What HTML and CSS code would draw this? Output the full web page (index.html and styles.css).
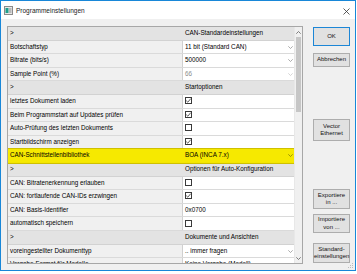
FILE: index.html
```html
<!DOCTYPE html>
<html>
<head>
<meta charset="utf-8">
<link rel="stylesheet" href="styles.css">
</head>
<body>
<div class="window">
  <div class="titlebar">
    <svg class="appicon" width="9" height="9" viewBox="0 0 9 9"><rect x="0.5" y="0.5" width="8" height="8" fill="#e8e8e8" stroke="#8a8a8a"/><rect x="1.5" y="2" width="3" height="5" fill="#1f9e8a"/><rect x="5" y="2" width="2.5" height="5" fill="#b9b9b9"/></svg>
    <span class="title">Programmeinstellungen</span>
    <svg class="close" width="7" height="7" viewBox="0 0 7 7"><path d="M0.5 0.5 L6.5 6.5 M6.5 0.5 L0.5 6.5" stroke="#333" stroke-width="0.8"/></svg>
  </div>
  <div class="client">
    <div class="grid">
      <div class="rows">
        <div class="row cat"><div class="name">&gt;</div><div class="val">CAN-Standardeinstellungen</div></div>
        <div class="row"><div class="name">Botschaftstyp</div><div class="val drop">11 bit (Standard CAN)<svg class="chev" width="5" height="3" viewBox="0 0 5 3"><path d="M0.3 0.3 L2.5 2.5 L4.7 0.3" fill="none" stroke="#8a8a8a" stroke-width="0.7"/></svg></div></div>
        <div class="row"><div class="name">Bitrate (bits/s)</div><div class="val drop">500000<svg class="chev" width="5" height="3" viewBox="0 0 5 3"><path d="M0.3 0.3 L2.5 2.5 L4.7 0.3" fill="none" stroke="#8a8a8a" stroke-width="0.7"/></svg></div></div>
        <div class="row"><div class="name">Sample Point (%)</div><div class="val drop dis">66<svg class="chev" width="5" height="3" viewBox="0 0 5 3"><path d="M0.3 0.3 L2.5 2.5 L4.7 0.3" fill="none" stroke="#c4c4c4" stroke-width="0.7"/></svg></div></div>
        <div class="row cat"><div class="name">&gt;</div><div class="val">Startoptionen</div></div>
        <div class="row"><div class="name">letztes Dokument laden</div><div class="val"><span class="cb on"><svg width="7" height="7" viewBox="0 0 7 7"><path d="M1.2 3.6 L2.8 5.2 L5.8 1.6" fill="none" stroke="#333" stroke-width="0.8"/></svg></span></div></div>
        <div class="row"><div class="name">Beim Programmstart auf Updates prüfen</div><div class="val"><span class="cb on"><svg width="7" height="7" viewBox="0 0 7 7"><path d="M1.2 3.6 L2.8 5.2 L5.8 1.6" fill="none" stroke="#333" stroke-width="0.8"/></svg></span></div></div>
        <div class="row"><div class="name">Auto-Prüfung des letzten Dokuments</div><div class="val"><span class="cb"></span></div></div>
        <div class="row"><div class="name">Startbildschirm anzeigen</div><div class="val"><span class="cb on"><svg width="7" height="7" viewBox="0 0 7 7"><path d="M1.2 3.6 L2.8 5.2 L5.8 1.6" fill="none" stroke="#333" stroke-width="0.8"/></svg></span></div></div>
        <div class="row hl"><div class="name">CAN-Schnittstellenbibliothek</div><div class="val drop">BOA (INCA 7.x)<svg class="chev" width="5" height="3" viewBox="0 0 5 3"><path d="M0.3 0.3 L2.5 2.5 L4.7 0.3" fill="none" stroke="#7a7400" stroke-width="0.7"/></svg></div></div>
        <div class="row cat"><div class="name">&gt;</div><div class="val">Optionen für Auto-Konfiguration</div></div>
        <div class="row"><div class="name">CAN: Bitratenerkennung erlauben</div><div class="val"><span class="cb"></span></div></div>
        <div class="row"><div class="name">CAN: fortlaufende CAN-IDs erzwingen</div><div class="val"><span class="cb on"><svg width="7" height="7" viewBox="0 0 7 7"><path d="M1.2 3.6 L2.8 5.2 L5.8 1.6" fill="none" stroke="#333" stroke-width="0.8"/></svg></span></div></div>
        <div class="row"><div class="name">CAN: Basis-Identifier</div><div class="val">0x0700</div></div>
        <div class="row"><div class="name">automatisch speichern</div><div class="val"><span class="cb"></span></div></div>
        <div class="row cat"><div class="name">&gt;</div><div class="val">Dokumente und Ansichten</div></div>
        <div class="row"><div class="name">voreingestellter Dokumenttyp</div><div class="val drop">.. immer fragen<svg class="chev" width="5" height="3" viewBox="0 0 5 3"><path d="M0.3 0.3 L2.5 2.5 L4.7 0.3" fill="none" stroke="#8a8a8a" stroke-width="0.7"/></svg></div></div>
        <div class="row"><div class="name">Vorgabe-Format für Modelle</div><div class="val drop">Keine Vorgabe (Modell)</div></div>
      </div>
      <div class="scrollbar">
        <div class="sb-arrow"><svg width="5" height="3" viewBox="0 0 5 3"><path d="M0.3 2.7 L2.5 0.5 L4.7 2.7" fill="none" stroke="#606060" stroke-width="0.8"/></svg></div>
        <div class="sb-thumb"></div>
        <div class="sb-track"></div>
        <div class="sb-arrow"><svg width="5" height="3" viewBox="0 0 5 3"><path d="M0.3 0.3 L2.5 2.5 L4.7 0.3" fill="none" stroke="#606060" stroke-width="0.8"/></svg></div>
      </div>
    </div>
    <div class="buttons">
      <button class="btn ok">OK</button>
      <button class="btn cancel">Abbrechen</button>
      <button class="btn vec">Vector<br>Ethernet</button>
      <button class="btn exp">Exportiere<br>in ...</button>
      <button class="btn imp">Importiere<br>von ...</button>
      <button class="btn std">Standard-<br>einstellungen</button>
    </div>
    <svg class="grip" width="5" height="5" viewBox="0 0 5 5"><rect x="4" y="0" width="1" height="1" fill="#bdbdbd"/><rect x="2" y="2" width="1" height="1" fill="#bdbdbd"/><rect x="4" y="2" width="1" height="1" fill="#bdbdbd"/><rect x="0" y="4" width="1" height="1" fill="#bdbdbd"/><rect x="2" y="4" width="1" height="1" fill="#bdbdbd"/><rect x="4" y="4" width="1" height="1" fill="#bdbdbd"/></svg>
  </div>
</div>
</body>
</html>
```

FILE: styles.css
```css
* { box-sizing: border-box; }
html, body { margin: 0; padding: 0; background: #ffffff; }
body {
  font-family: "Liberation Sans", Arial, sans-serif;
  font-size: 6.3px;
  color: #000;
  width: 357px;
  height: 274px;
  overflow: hidden;
}
.window {
  width: 356px;
  height: 271px;
  border: 1px solid #1887d8;
  display: flex;
  flex-direction: column;
  background: #f0f0f0;
}
.titlebar {
  height: 18px;
  background: #ffffff;
  display: flex;
  align-items: center;
  padding-left: 3px;
  flex: none;
}
.appicon { flex: none; margin-top: 1px; }
.title {
  margin-left: 3px;
  font-size: 6.5px;
  color: #1a1a1a;
  flex: 1;
  padding-top: 1px;
}
.close { margin-right: 5px; margin-top: 2px; }
.client {
  flex: 1;
  display: flex;
  padding: 7px 0 0 6px;
  position: relative;
}
.grid {
  width: 296px;
  height: 238px;
  border: 1px solid #a7a7a7;
  display: flex;
  background: #ffffff;
  overflow: hidden;
}
.rows {
  flex: 1;
  display: flex;
  flex-direction: column;
  overflow: hidden;
}
.row {
  display: flex;
  height: 13.6px;
  flex: none;
  border-bottom: 1px solid #dadada;
  line-height: 12.6px;
  white-space: nowrap;
}
.name {
  width: 175px;
  padding-left: 2px;
  background: #f0f0f0;
  border-right: 1px solid #d0d0d0;
  overflow: hidden;
}
.val {
  flex: 1;
  padding-left: 2px;
  background: #ffffff;
  position: relative;
  overflow: hidden;
}
.row.cat .name, .row.cat .val { background: #e3e3e3; }
.row.cat .name { border-right-color: #e3e3e3; }
.row.cat { border-bottom-color: #d2d2d2; }
.dis { color: #8c8c8c; }
.chev { position: absolute; right: 1px; top: 5px; }
.cb {
  display: inline-block;
  width: 7px;
  height: 7px;
  border: 0.8px solid #3a3a3a;
  background: #fff;
  vertical-align: middle;
  margin-top: -1px;
  position: relative;
}
.cb svg { position: absolute; left: -1px; top: -1px; }
.row.hl {
  outline: 1.3px solid #cfc000;
  outline-offset: 0;
  position: relative;
  z-index: 1;
  border-bottom-color: #f3e600;
}
.row.hl .name, .row.hl .val { background: #f6e900; border-right-color: #f6e900; }
.scrollbar {
  width: 8px;
  display: flex;
  flex-direction: column;
  background: #f0f0f0;
  border-left: 1px solid #e8e8e8;
}
.sb-arrow {
  height: 10px;
  display: flex;
  align-items: center;
  justify-content: center;
  flex: none;
}
.sb-thumb {
  height: 75px;
  margin: 0 1px;
  background: #c6c6c6;
  flex: none;
}
.sb-track { flex: 1; }
.buttons {
  display: flex;
  flex-direction: column;
  margin-left: 10px;
  width: 37px;
}
.btn {
  font-family: "Liberation Sans", Arial, sans-serif;
  font-size: 6px;
  line-height: 7.2px;
  background: #e1e1e1;
  border: 1px solid #adadad;
  padding: 0;
  color: #111;
  width: 37px;
  flex: none;
}
.ok { height: 19px; margin-top: 1px; border: 1.6px solid #1c86d6; }
.cancel { height: 14px; margin-top: 7px; }
.vec { height: 22px; margin-top: 52px; }
.exp { height: 20px; margin-top: 48px; }
.imp { height: 19px; margin-top: 5px; }
.std { height: 20px; margin-top: 10px; }
.grip { position: absolute; right: 2px; bottom: 2px; }
```
